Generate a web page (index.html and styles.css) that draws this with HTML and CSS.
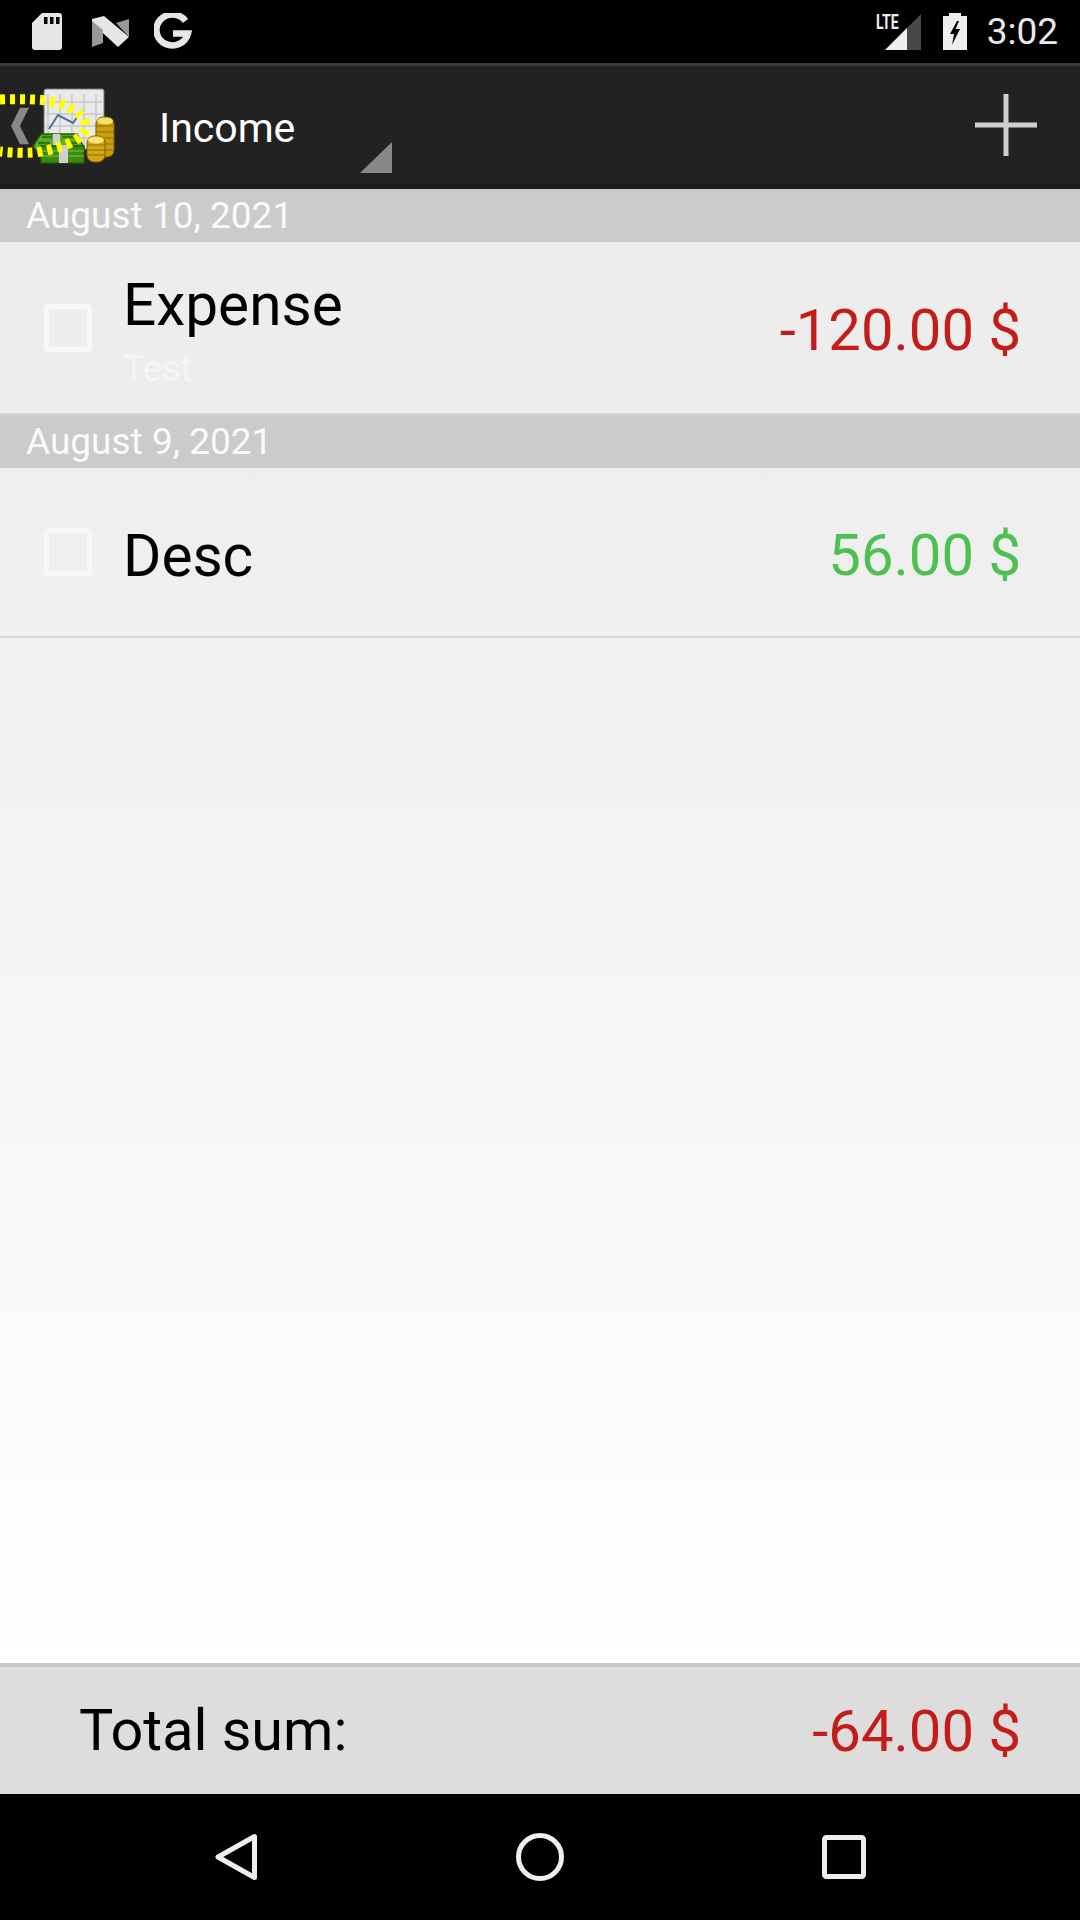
FILE: index.html
```html
<!DOCTYPE html>
<html lang="en">
<head>
<meta charset="utf-8">
<title>Income</title>
<link rel="stylesheet" href="styles.css">
</head>
<body>
<div class="screen">
  <header class="status">
    <div class="status-left">
      <svg class="ic-sd" viewBox="0 0 30 37"><path d="M10 0H27a3 3 0 0 1 3 3V34a3 3 0 0 1-3 3H3a3 3 0 0 1-3-3V10Z" fill="#e6e6e6"/><path d="M12 4h3.500v7H12ZM18 4h3.500v7H18ZM24 4h3.500v7H24Z" fill="#000"/></svg>
      <svg class="ic-n" viewBox="0 0 37 31"><path d="M0 3 12 0 37 21 26 31 0 7Z" fill="#e6e6e6"/><path d="M0 5 11 14V27L0 31Z" fill="#999"/><path d="M24 7 37 3V21Z" fill="#999"/></svg>
      <svg class="ic-g" viewBox="0 0 38 37"><path d="M31.500 8A16 15.500 0 1 0 34 20.500H19" fill="none" stroke="#e6e6e6" stroke-width="6.500"/></svg>
    </div>
    <div class="status-right">
      <div class="signal">
        <span class="lte">LTE</span>
        <svg class="ic-signal" viewBox="0 0 36 36"><path d="M0 36 36 0V36Z" fill="#484848"/><path d="M0 36 22 14V36Z" fill="#eee"/></svg>
      </div>
      <svg class="ic-batt" viewBox="0 0 24 37"><path d="M6 0H18V3H24V37H0V3H6Z" fill="#eee"/><path d="M14 8 7 21H11L9 32 17 16H12.500L16 8Z" fill="#000"/></svg>
      <span class="time">3:02</span>
    </div>
  </header>

  <nav class="actionbar">
    <svg class="app-icon" viewBox="0 0 120 90">
      <path d="M20 27.700H29L20 46 29 64.300H20L11 46Z" fill="#888"/>
      <rect x="44" y="9" width="60" height="60" rx="2" fill="#e9e9e9" stroke="#777" stroke-width="1"/>
      <path d="M48 14V66M60 14V66M72 14V66M84 14V66M96 14V66M46 22H102M46 34H102M46 46H102M46 58H102" stroke="#c8c8c8" stroke-width="1.500" fill="none"/>
      <path d="M49 49 58 35 73 43 82 30" fill="none" stroke="#4a6fa8" stroke-width="2"/>
      <path d="M41 54H77L83 66V78H41L33 66Z" fill="#5fae2c" stroke="#235a08" stroke-width="1.500"/>
      <path d="M42 57H52M62 57H75M38 63H50M66 63H80" stroke="#2f7a0c" stroke-width="2.500"/>
      <rect x="41" y="66" width="43" height="17" fill="#3c8a10" stroke="#235a08" stroke-width="1.500"/>
      <path d="M42 71H84M42 76H84" stroke="#65b52f" stroke-width="1.500"/>
      <rect x="53" y="54" width="7" height="11" fill="#cfcfcf"/>
      <rect x="59" y="65" width="9" height="18" fill="#cfcfcf"/>
      <rect x="96" y="37" width="18" height="40" rx="7" fill="#c99f0c" stroke="#7d6206"/>
      <path d="M96 46H114M96 52H114M96 58H114M96 64H114M96 70H114" stroke="#8a6c08"/>
      <ellipse cx="105" cy="41" rx="8" ry="3.500" fill="#f4df6a"/>
      <rect x="87" y="56" width="18" height="26" rx="7" fill="#d2a80e" stroke="#7d6206"/>
      <path d="M87 65H105M87 70H105M87 75H105" stroke="#8a6c08"/>
      <ellipse cx="96" cy="60" rx="8" ry="3.500" fill="#f7e679"/>
      <path d="M0 19.500C14 19 28 19 42 20 55 21.500 66 25 77 32 84 38 87 44 86 49 83 56 74 62 63 66 53 69 43 72 33 72.500 24 73 14 73 0 71.500" fill="none" stroke="#ffff00" stroke-width="10" stroke-dasharray="5 5"/>
    </svg>
    <div class="spinner">
      <span class="spinner-label">Income</span>
      <svg class="spinner-arrow" viewBox="0 0 32 32"><path d="M0 31 32 0V31Z" fill="#888"/></svg>
    </div>
    <svg class="ic-plus" viewBox="0 0 62 62"><path d="M28.500 0h5v28.500H62v5H33.500V62h-5V33.500H0v-5h28.500Z" fill="#cfcfcf"/></svg>
  </nav>

  <main class="list">
    <div class="date">August 10, 2021</div>
    <div class="row">
      <span class="check"></span>
      <div class="row-text">
        <span class="title">Expense</span>
        <span class="sub">Test</span>
      </div>
      <span class="amount neg">-120.00 $</span>
    </div>
    <div class="date">August 9, 2021</div>
    <div class="row row-single">
      <span class="check"></span>
      <div class="row-text">
        <span class="title">Desc</span>
      </div>
      <span class="amount pos">56.00 $</span>
    </div>
  </main>

  <section class="total">
    <span class="total-label">Total sum:</span>
    <span class="amount neg">-64.00 $</span>
  </section>

  <footer class="navbar">
    <svg class="ic-nav" viewBox="0 0 48 48"><path d="M42.500 3.500V44.500L6 24Z" fill="none" stroke="#eee" stroke-width="5" stroke-linejoin="round"/></svg>
    <svg class="ic-nav" viewBox="0 0 48 48"><circle cx="24" cy="24" r="21.500" fill="none" stroke="#eee" stroke-width="5"/></svg>
    <svg class="ic-nav" viewBox="0 0 48 48"><rect x="4.500" y="4.500" width="39" height="39" rx="2" fill="none" stroke="#eee" stroke-width="5"/></svg>
  </footer>
</div>
</body>
</html>
```
FILE: styles.css
```css
* { box-sizing: border-box; }
html, body { margin: 0; padding: 0; }
body { font-family: Roboto, "Liberation Sans", sans-serif; background: #000; }
.screen { width: 1080px; height: 1920px; display: flex; flex-direction: column; overflow: hidden; }

.status { height: 63px; flex: none; background: #000; display: flex; justify-content: space-between; align-items: center; padding: 0 22px 0 32px; }
.status-left, .status-right { display: flex; align-items: center; }
.ic-sd { width: 30px; height: 37px; }
.ic-n { width: 37px; height: 31px; margin-left: 30px; }
.ic-g { width: 38px; height: 37px; margin-left: 25px; }
.signal { position: relative; width: 45px; height: 37px; }
.lte { position: absolute; left: 0; top: 0; font-size: 21px; line-height: 18px; font-weight: 700; color: #eee; transform: scaleX(.67); transform-origin: left top; }
.ic-signal { position: absolute; right: 0; bottom: 0; width: 36px; height: 36px; }
.ic-batt { width: 24px; height: 37px; margin-left: 22px; }
.time { margin-left: 20px; font-size: 37px; color: #e8e8e8; }

.actionbar { height: 126px; flex: none; background: #222; border-top: 3px solid #3a3a3a; border-bottom: 5px solid #1c1c1c; display: flex; align-items: center; padding-right: 43px; }
.app-icon { width: 120px; height: 90px; flex: none; }
.spinner { position: relative; flex: 1; margin-left: 39px; height: 100%; display: flex; align-items: center; }
.spinner-label { font-size: 41px; color: #fff; padding-top: 5px; }
.spinner-arrow { position: absolute; left: 201px; bottom: 10px; width: 32px; height: 32px; }
.ic-plus { width: 62px; height: 62px; flex: none; }

.list { flex: 1; background: linear-gradient(#ededed 200px, #fff); }
.date { height: 53px; background: #cbcbcb; color: #fafafa; font-size: 37px; line-height: 54px; padding-left: 26px; }
.row { height: 173px; border-bottom: 2px solid #d6d6d6; display: flex; align-items: center; padding: 0 59px 0 44px; }
.row-single { height: 170px; }
.check { width: 48px; height: 48px; border: 5px solid #f8f8f8; border-radius: 5px; flex: none; }
.row-text { flex: 1; margin: 7px 0 0 31px; display: flex; flex-direction: column; }
.title { font-size: 58.500px; line-height: 68px; color: #000; }
.sub { font-size: 36px; line-height: 44px; color: #f5f5f5; margin-top: 8px; }
.amount { font-size: 58px; }
.row .amount { margin-top: 5px; }
.neg { color: #c41c18; }
.pos { color: #4cc050; }

.total { height: 131px; flex: none; background: #ddd; border-top: 4px solid #c8c8c8; display: flex; justify-content: space-between; align-items: center; padding: 0 59px 0 79px; }
.total-label { font-size: 57.500px; color: #000; }

.navbar { height: 126px; flex: none; background: #000; display: flex; justify-content: space-between; align-items: center; padding: 0 212px; }
.ic-nav { width: 48px; height: 48px; }
```
